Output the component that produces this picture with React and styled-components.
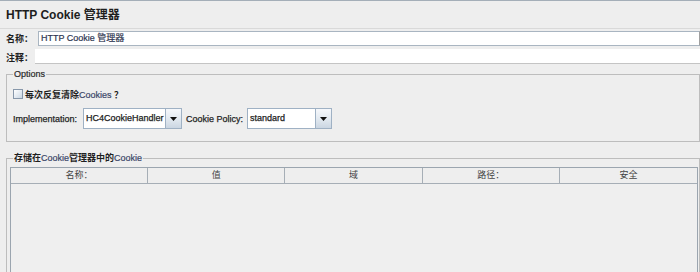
import styled, { createGlobalStyle } from "styled-components"

const GlobalStyle = createGlobalStyle`
  html, body { margin: 0; padding: 0; background: #eeeeee; }
  body { font-family: "Liberation Sans", "Noto Sans CJK SC", sans-serif; }
`

const columns = ["名称：", "值", "域", "路径：", "安全"]

function DropArrow() {
  return (
    <svg width="7" height="4" viewBox="0 0 7 4">
      <polygon points="0,0 7,0 3.5,4" fill="#111" />
    </svg>
  )
}

function App() {
  return (
    <Page>
      <GlobalStyle />
      <Title>HTTP Cookie 管理器</Title>

      <FieldRow $h={18} $align="center">
        <FieldLabel>名称：</FieldLabel>
        <NameInput>HTTP Cookie 管理器</NameInput>
      </FieldRow>
      <FieldRow $h={17} $align="flex-end">
        <FieldLabel>注释：</FieldLabel>
        <CommentInput />
      </FieldRow>

      <Group $mt={5} $pad="7px 0 12px 6px">
        <GroupTitle $shift={0}>Options</GroupTitle>
        <CheckRow>
          <CheckBox />
          <CheckText>
            每次反复清除<Latin>Cookies</Latin> ？
          </CheckText>
        </CheckRow>
        <ComboRow>
          <InlineLabel $gap={6}>Implementation:</InlineLabel>
          <Combo $w={99} $gap={4}>
            <ComboValue>HC4CookieHandler</ComboValue>
            <ComboArrow><DropArrow /></ComboArrow>
          </Combo>
          <InlineLabel $gap={4}>Cookie Policy:</InlineLabel>
          <Combo $w={85} $gap={0}>
            <ComboValue>standard</ComboValue>
            <ComboArrow><DropArrow /></ComboArrow>
          </Combo>
        </ComboRow>
      </Group>

      <Group $mt={11} $pad="3px 1px 0 3px">
        <CookieTitle $shift={3}>
          存储在<Latin>Cookie</Latin>管理器中的<Latin>Cookie</Latin>
        </CookieTitle>
        <TableFrame>
          <HeaderRow>
            {columns.map(c => (
              <HeaderCell key={c}>{c}</HeaderCell>
            ))}
          </HeaderRow>
          <TableBody />
        </TableFrame>
      </Group>
    </Page>
  )
}

const Page = styled.div`
  width: 700px;
  height: 272px;
  overflow: hidden;
  box-sizing: border-box;
  border-top: 1px solid #a4aeb8;
  background: #eeeeee;
`

const Title = styled.h1`
  margin: 0;
  height: 27px;
  padding-left: 6px;
  font-size: 12px;
  font-weight: bold;
  line-height: 29px;
  color: #1e1e1e;
  border-bottom: 1px solid #d9d9d9;
  white-space: nowrap;
`

const FieldRow = styled.div`
  display: flex;
  align-items: ${p => p.$align};
  height: ${p => p.$h}px;
`

const FieldLabel = styled.label`
  padding-left: 6px;
  font-size: 9px;
  font-weight: bold;
  color: #1f1f1f;
  white-space: nowrap;
`

const NameInput = styled.div`
  flex: 1;
  margin-left: 5px;
  height: 15px;
  box-sizing: border-box;
  padding-left: 2px;
  background: #fff;
  border: 1px solid #a9b5c1;
  border-right-color: #a0a0a0;
  font-size: 9px;
  line-height: 13px;
  color: #2d3550;
  -webkit-text-stroke: 0.2px #2d3550;
  white-space: nowrap;
`

const CommentInput = styled.div`
  flex: 1;
  margin-left: 2px;
  height: 15px;
  box-sizing: border-box;
  background: #fff;
  border-bottom: 1px solid #c4c4c4;
`

const Group = styled.fieldset`
  margin: ${p => p.$mt}px 0 0 6px;
  padding: ${p => p.$pad};
  border: 1px solid #bdbdbd;
  min-width: 0;
`

const GroupTitle = styled.legend`
  margin-left: ${p => p.$shift}px;
  padding: 0 1px;
  font-size: 9px;
  line-height: 11px;
  color: #2a2a2a;
  -webkit-text-stroke: 0.2px #2a2a2a;
  white-space: nowrap;
`

const CookieTitle = styled(GroupTitle)`
  font-weight: bold;
  color: #1f1f1f;
  -webkit-text-stroke: 0;
`

const Latin = styled.span`
  font-weight: normal;
  color: #3b4668;
  -webkit-text-stroke: 0.2px #3b4668;
`

const CheckRow = styled.div`
  display: flex;
  align-items: center;
  height: 14px;
`

const CheckBox = styled.span`
  width: 10px;
  height: 10px;
  box-sizing: border-box;
  margin-right: 2px;
  border: 1px solid #8797aa;
  background: linear-gradient(135deg, #ffffff 0%, #dfe7ef 60%, #c9d5e1 100%);
`

const CheckText = styled.span`
  font-size: 9px;
  font-weight: bold;
  color: #1f1f1f;
  white-space: nowrap;
`

const ComboRow = styled.div`
  display: flex;
  align-items: center;
  margin-top: 7px;
  height: 21px;
`

const InlineLabel = styled.span`
  margin-right: ${p => p.$gap}px;
  font-size: 9px;
  color: #262626;
  -webkit-text-stroke: 0.25px #262626;
  white-space: nowrap;
`

const Combo = styled.div`
  display: flex;
  width: ${p => p.$w}px;
  height: 21px;
  box-sizing: border-box;
  margin-right: ${p => p.$gap}px;
  border: 1px solid #9fb1c4;
  background: #fff;
`

const ComboValue = styled.span`
  flex: 1;
  padding-left: 2px;
  font-size: 9px;
  line-height: 19px;
  color: #1c1c1c;
  -webkit-text-stroke: 0.25px #1c1c1c;
  white-space: nowrap;
  overflow: hidden;
`

const ComboArrow = styled.span`
  width: 15px;
  display: flex;
  align-items: center;
  justify-content: center;
  border-left: 1px solid #9fb1c4;
  background: linear-gradient(to bottom, #f6f8fb 0%, #e3eaf1 50%, #cbd6e2 100%);
`

const TableFrame = styled.div`
  display: flex;
  flex-direction: column;
  height: 200px;
  border: 1px solid #9ba5af;
  background: #efefef;
`

const HeaderRow = styled.div`
  display: grid;
  grid-template-columns: repeat(5, 1fr);
`

const HeaderCell = styled.div`
  height: 15px;
  border-right: 1px solid #a6aeb6;
  border-bottom: 1px solid #a6aeb6;
  background: #eeeeee;
  text-align: center;
  font-size: 9px;
  line-height: 15px;
  color: #444;
  &:last-child { border-right: none; }
`

const TableBody = styled.div`
  flex: 1;
  background: #efefef;
`

export default App
